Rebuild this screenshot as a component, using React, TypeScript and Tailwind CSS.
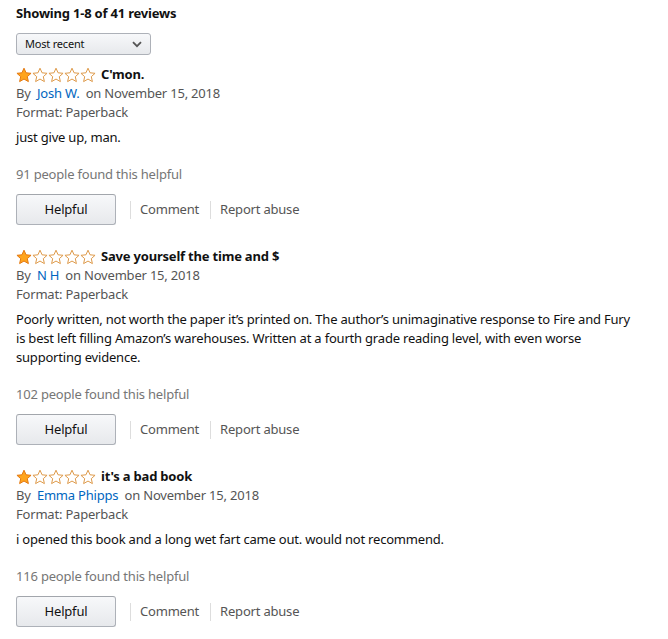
import React from "react";

type Review = {
  title: string;
  author: string;
  date: string;
  body: string;
  helpful: number;
};

const reviews: Review[] = [
  {
    title: "C'mon.",
    author: "Josh W.",
    date: "November 15, 2018",
    body: "just give up, man.",
    helpful: 91,
  },
  {
    title: "Save yourself the time and $",
    author: "N H",
    date: "November 15, 2018",
    body: "Poorly written, not worth the paper it\u2019s printed on. The author\u2019s unimaginative response to Fire and Fury is best left filling Amazon\u2019s warehouses. Written at a fourth grade reading level, with even worse supporting evidence.",
    helpful: 102,
  },
  {
    title: "it's a bad book",
    author: "Emma Phipps",
    date: "November 15, 2018",
    body: "i opened this book and a long wet fart came out. would not recommend.",
    helpful: 116,
  },
];

const STAR = "M8 1.2l2.05 4.6 5 .5-3.75 3.35 1.08 4.95L8 12.05 3.62 14.6l1.08-4.95L.95 6.3l5-.5z";

const Stars = ({ filled }: { filled: number }) => (
  <div className="flex">
    {[0, 1, 2, 3, 4].map((i) => (
      <svg key={i} width="16" height="16" viewBox="0 0 16 16" className="shrink-0">
        <path
          d={STAR}
          fill={i < filled ? "#ffa41c" : "#fff"}
          stroke={i < filled ? "#e47911" : "#de9a4a"}
          strokeWidth="1"
          strokeLinejoin="round"
        />
      </svg>
    ))}
  </div>
);

const ReviewItem = ({ review }: { review: Review }) => (
  <div className="mt-[10px] mb-[22px]">
    <div className="flex items-center h-[19px]">
      <Stars filled={1} />
      <span className="ml-[5px] font-bold text-[#111]">{review.title}</span>
    </div>
    <div className="h-[19px] leading-[19px] text-[#555]">
      By <a className="ml-[3px] mr-[3px] text-[#0066c0]">{review.author}</a> on {review.date}
    </div>
    <div className="h-[19px] leading-[19px] text-[#555]">Format: Paperback</div>
    <p className="mt-[6px] leading-[19px] text-[#111] pr-[14px]">{review.body}</p>
    <div className="mt-[18px] h-[19px] leading-[19px] text-[#767676]">
      {review.helpful} people found this helpful
    </div>
    <div className="mt-[10px] flex items-center">
      <button className="w-[100px] h-[31px] rounded-[3px] border border-[#adb1b8] border-t-[#a2a6ac] bg-gradient-to-b from-[#f7f8fa] to-[#e7e9ec] text-[#111]">
        Helpful
      </button>
      <span className="ml-[14px] h-[18px] border-l border-[#ddd]" />
      <span className="ml-[9px] text-[#555]">Comment</span>
      <span className="ml-[11px] h-[18px] border-l border-[#ddd]" />
      <span className="ml-[9px] text-[#555]">Report abuse</span>
    </div>
  </div>
);

export default function App() {
  return (
    <div className="min-h-screen bg-white px-4 pt-[4px] text-[13px] tracking-[-0.2px] font-['Noto_Sans',sans-serif]">
      <div className="h-[19px] leading-[19px] font-bold text-[#111]">Showing 1-8 of 41 reviews</div>
      <div className="mt-[10px] w-[135px] h-[22px] rounded-[3px] border border-[#adb1b8] bg-gradient-to-b from-[#f7f8fa] to-[#e7e9ec] flex items-center justify-between px-[8px] text-[11px] text-[#111]">
        <span>Most recent</span>
        <svg width="10" height="7" viewBox="0 0 10 7">
          <path d="M1 1.2l4 4 4-4" fill="none" stroke="#555" strokeWidth="1.8" />
        </svg>
      </div>
      {reviews.map((r, i) => (
        <ReviewItem key={i} review={r} />
      ))}
    </div>
  );
}
